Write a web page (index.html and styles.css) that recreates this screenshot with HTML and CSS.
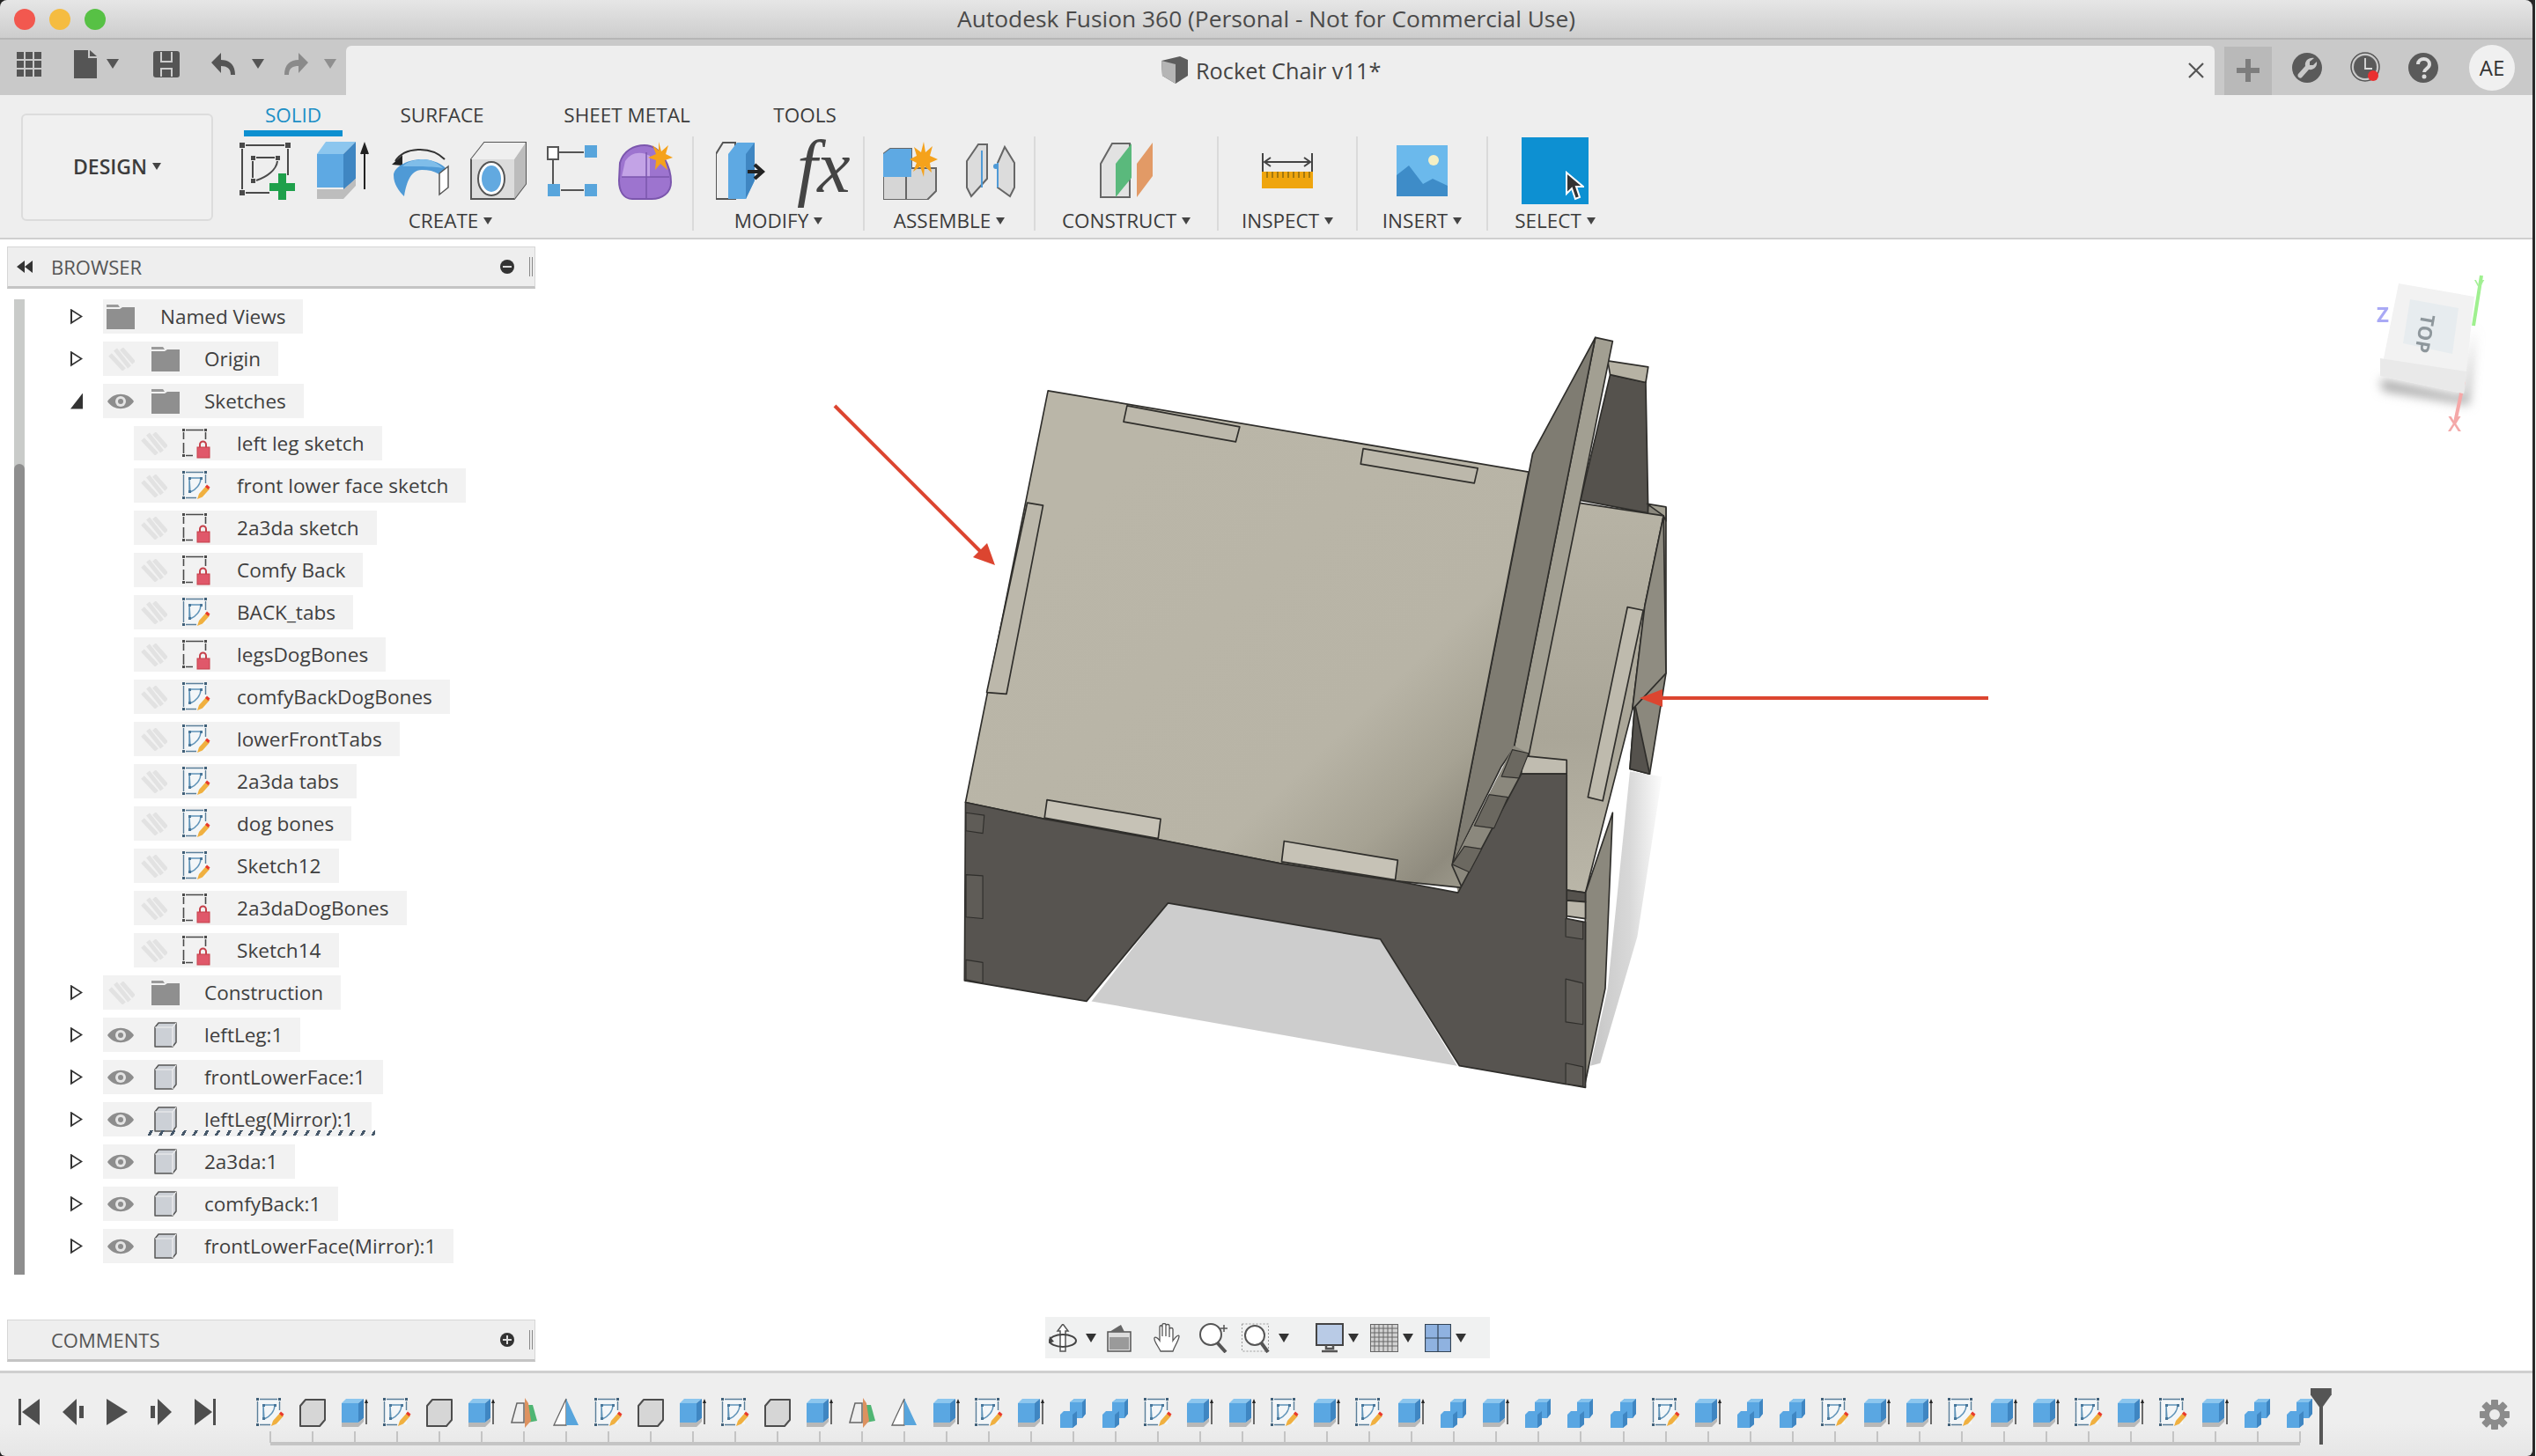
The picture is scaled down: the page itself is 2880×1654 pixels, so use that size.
FILE: index.html
```html
<!DOCTYPE html>
<html lang="en">
<head>
<meta charset="utf-8">
<title>Autodesk Fusion 360</title>
<link rel="stylesheet" href="styles.css">
</head>
<body>
<svg class="defs" width="0" height="0">
  <defs>
    <symbol id="sk-base" viewBox="0 0 32 34">
      <g fill="#4a4a4a"><rect x="0" y="0" width="3" height="3"/><rect x="25" y="0" width="3" height="3"/><rect x="0" y="29" width="3" height="3"/></g>
      <path d="M4 1.5H24M1.5 4V12M1.5 16V28M4 30.5H12M26.5 4V12" stroke="#4a4a4a" stroke-width="1.6" fill="none"/>
    </symbol>
    <symbol id="sk-lock" viewBox="0 0 32 34">
      <use href="#sk-base" width="32" height="34"/>
      <path d="M20 21v-3a3.5 3.5 0 0 1 7 0v3" fill="none" stroke="#c5404a" stroke-width="2"/>
      <rect x="17" y="21" width="14" height="12" fill="#e0586a" stroke="#c5404a"/>
    </symbol>
    <symbol id="sk-edit" viewBox="0 0 32 34">
      <path d="M2 2H27V30H2Z" fill="#f3f6f8"/>
      <g fill="#3f5f78"><rect x="0" y="0" width="3" height="3"/><rect x="25" y="0" width="3" height="3"/><rect x="0" y="29" width="3" height="3"/></g>
      <path d="M4 1.5H24M1.5 4V28M4 30.5H16M26.5 4V14" stroke="#5b7f9a" stroke-width="1.4" fill="none"/>
      <path d="M8 8H21C21 15 16 21 9 24ZM8 8V24" fill="none" stroke="#5f93b8" stroke-width="1.4"/>
      <g fill="#49779a"><rect x="7" y="7" width="3" height="3"/><rect x="20" y="7" width="3" height="3"/><rect x="7" y="22" width="3" height="3"/></g>
      <path d="M17 32l2-6 8-9 4 3.500-8 9z" fill="#f0b040"/>
      <path d="M26 18l2-2.500 3.500 3-2 2.500z" fill="#e8392c"/>
    </symbol>
    <symbol id="cube" viewBox="0 0 32 34">
      <path d="M8 2H30V25L24 32H2V9Z" fill="#d6d6d6" stroke="#4d4d4d" stroke-width="2" stroke-linejoin="round"/>
    </symbol>
    <symbol id="extrude" viewBox="0 0 32 34">
      <path d="M1 6H20V28H1Z" fill="#5aa7e2"/>
      <path d="M1 6L6 1H26L20 6Z" fill="#8cc6ee"/>
      <path d="M20 6L26 1V23L20 28Z" fill="#3f86c2"/>
      <path d="M1 28H20L26 23V27L20 33H1Z" fill="#b8b8b8"/>
      <path d="M29 30V4" stroke="#222" stroke-width="1.300" fill="none"/>
      <path d="M27 6L29 1L31 6Z" fill="#222"/>
    </symbol>
    <symbol id="combine" viewBox="0 0 32 34">
      <path d="M1 19L5 15H12V5L17 1H30V18L26 23H20V30L15 34H1Z" fill="#59a6e2"/>
      <path d="M12 5L17 1H30L26 5Z" fill="#86c2ec"/>
      <path d="M26 5L30 1V18L26 23Z" fill="#3f86c2"/>
      <path d="M15 19V34L20 30V15Z" fill="#3f86c2"/>
    </symbol>
    <symbol id="plane" viewBox="0 0 32 34">
      <path d="M2 28L8 6H16V28Z" fill="#eee" stroke="#666" stroke-width="1.500"/>
      <path d="M20 8H26L31 26L20 28Z" fill="#4fb573"/>
      <path d="M17 0V34L24 26L21 6Z" fill="#dd9260"/>
    </symbol>
    <symbol id="mirror" viewBox="0 0 32 34">
      <path d="M2 31L16 1V31Z" fill="#fff" stroke="#666" stroke-width="1.300"/>
      <path d="M16 1L30 31H16Z" fill="#58a5dc"/>
    </symbol>
    <symbol id="eye" viewBox="0 0 32 20">
      <path d="M1 10C8 -1 24 -1 31 10C24 21 8 21 1 10Z" fill="#8d8d8d"/>
      <circle cx="16" cy="10" r="6" fill="#e4e4e4"/>
      <circle cx="16" cy="10" r="3" fill="#8d8d8d"/>
    </symbol>
    <symbol id="eye-off" viewBox="0 0 32 26">
      <path d="M4 8L20 25M10 2L26 22M17 1L31 17" stroke="#e2e2e2" stroke-width="5" fill="none"/>
    </symbol>
    <symbol id="folder" viewBox="0 0 32 28">
      <path d="M0 0H13L15 3H0Z" fill="#9a9a9a"/>
      <path d="M0 5H15L18 3H32V28H0Z" fill="#8f8f8f"/>
    </symbol>
    <symbol id="body" viewBox="0 0 28 30">
      <path d="M6 1H26V23L22 28H2V6Z" fill="#ccd0d6" stroke="#555" stroke-width="1.500" stroke-linejoin="round"/>
      <path d="M2 6H22L26 1M22 6V28" fill="none" stroke="#f2f2f2" stroke-width="1.200"/>
    </symbol>
  </defs>
</svg>

<header class="titlebar">
  <div class="lights"><i class="light red"></i><i class="light amber"></i><i class="light green"></i></div>
  <div class="title">Autodesk Fusion 360 (Personal - Not for Commercial Use)</div>
</header>

<div class="tabbar">
  <div class="quick">
    <svg class="q-grid" width="28" height="28" viewBox="0 0 28 28"><g fill="#555"><rect width="8" height="8"/><rect x="10" width="8" height="8"/><rect x="20" width="8" height="8"/><rect y="10" width="8" height="8"/><rect x="10" y="10" width="8" height="8"/><rect x="20" y="10" width="8" height="8"/><rect y="20" width="8" height="8"/><rect x="10" y="20" width="8" height="8"/><rect x="20" y="20" width="8" height="8"/></g></svg>
    <svg class="q-file" width="26" height="32" viewBox="0 0 26 32"><path d="M0 0H16V9H26V32H0ZM18 0L26 7H18Z" fill="#555"/></svg>
    <i class="tri q-tri1"></i>
    <svg class="q-save" width="30" height="30" viewBox="0 0 30 30"><path d="M3 0H27Q30 0 30 3V27Q30 30 27 30H3Q0 30 0 27V3Q0 0 3 0Z" fill="#555"/><path d="M9 1V12H21V1" fill="none" stroke="#ccc" stroke-width="2"/><path d="M9 29V20H21V29" fill="none" stroke="#ccc" stroke-width="2"/></svg>
    <svg class="q-undo" width="28" height="26" viewBox="0 0 28 26"><path d="M11 0V8C20 8 27 13 27 25H22C22 17 17 15 11 15V23L0 11Z" fill="#555"/></svg>
    <i class="tri q-tri2"></i>
    <svg class="q-redo" width="28" height="26" viewBox="0 0 28 26"><path d="M17 0V8C8 8 1 13 1 25H6C6 17 11 15 17 15V23L28 11Z" fill="#8a8a8a"/></svg>
    <i class="tri tri-dim q-tri3"></i>
  </div>
  <div class="doc-tab">
    <div class="doc-title">
      <svg width="32" height="32" viewBox="0 0 32 32"><path d="M1 5L22 0L31 4V22L17 31L2 22Z" fill="#5d5d5d"/><path d="M1 5L17 9V31L2 22Z" fill="#b5b5b5"/></svg>
      <span>Rocket Chair v11*</span>
    </div>
    <svg class="doc-close" width="18" height="18" viewBox="0 0 18 18"><path d="M1 1L17 17M17 1L1 17" stroke="#555" stroke-width="2.200"/></svg>
  </div>
  <div class="account">
    <div class="new-tab"><svg width="26" height="26" viewBox="0 0 26 26"><path d="M10 0H16V10H26V16H16V26H10V16H0V10H10Z" fill="#7d7d7d"/></svg></div>
    <svg class="acc-ic" width="34" height="34" viewBox="0 0 34 34"><circle cx="17" cy="17" r="17" fill="#5a5a5a"/><path d="M25 6L20 10V14H24L28 10C29 15 25 20 19 19L11 28C9 30 5 27 7 24L15 15C14 9 19 5 25 6Z" fill="#c9c9c9"/></svg>
    <svg class="acc-ic" width="34" height="36" viewBox="0 0 34 36"><circle cx="17" cy="17" r="16" fill="#c9c9c9" stroke="#555" stroke-width="1.500"/><circle cx="17" cy="17" r="13" fill="#5a5a5a"/><path d="M17 7V19H25" fill="none" stroke="#ddd" stroke-width="1.800"/><circle cx="26" cy="27" r="6" fill="#ea3030"/></svg>
    <svg class="acc-ic" width="34" height="34" viewBox="0 0 34 34"><circle cx="17" cy="17" r="17" fill="#5a5a5a"/><path d="M11 13C11 5 24 5 24 13C24 18 18 18 18 22" fill="none" stroke="#ddd" stroke-width="4"/><circle cx="18" cy="27" r="2.500" fill="#ddd"/></svg>
    <div class="avatar">AE</div>
  </div>
</div>

<div class="toolbar">
  <div class="design"><span>DESIGN</span><i class="tri tri-sm"></i></div>
  <div class="tool-main">
    <nav class="tabs">
      <span class="tab tab-on">SOLID</span>
      <span class="tab tab-surface">SURFACE</span>
      <span class="tab tab-sheet">SHEET METAL</span>
      <span class="tab tab-tools">TOOLS</span>
    </nav>
    <div class="ribbon">
      <section class="group g-create">
        <div class="tools">
          <svg width="64" height="66" viewBox="0 0 64 66"><g fill="#4a4a4a"><rect x="1" y="1" width="6" height="6"/><rect x="53" y="1" width="6" height="6"/><rect x="1" y="55" width="6" height="6"/><rect x="14" y="16" width="5" height="5"/><rect x="42" y="16" width="5" height="5"/><rect x="14" y="42" width="5" height="5"/></g><path d="M8 4H52M4 8V54M8 58H35M56 8V38M20 18H41M16 22V41M44 22C43 32 32 40 20 44" fill="none" stroke="#4a4a4a" stroke-width="2"/><path d="M45 36H54V47H64V56H54V66H45V56H35V47H45Z" fill="#1ea04b"/></svg>
          <svg width="64" height="66" viewBox="0 0 64 66"><path d="M2 14H32V52H2Z" fill="#5ea9e3"/><path d="M2 14L12 0H46L32 14Z" fill="#8cc6ee"/><path d="M32 14L46 0V42L32 56Z" fill="#3f86c2"/><path d="M2 54H32L46 42V50L32 65H2Z" fill="#bdbdbd"/><path d="M56 54V8M52 14L56 3L60 14" stroke="#222" stroke-width="2" fill="#222"/></svg>
          <svg width="66" height="62" viewBox="0 0 66 62"><path d="M4 20C14 4 44 2 60 18" fill="none" stroke="#333" stroke-width="2"/><path d="M0 24L12 13V25Z" fill="#222"/><path d="M2 36C2 28 16 18 34 18C48 18 62 26 62 30V46C58 36 50 30 34 30C20 30 16 48 14 60C8 54 2 46 2 36Z" fill="#4f9ad6"/><path d="M12 26C18 20 28 18 36 18C44 18 52 22 58 28C48 26 22 26 12 26Z" fill="#7fbde9"/><path d="M54 34L64 26V50L54 58Z" fill="#fff" stroke="#555" stroke-width="1.500"/></svg>
          <svg width="64" height="66" viewBox="0 0 64 66"><path d="M1 20L16 1H63V48L50 65H1Z" fill="#dcdcdc" stroke="#555" stroke-width="2"/><path d="M50 20L63 1V48L50 65Z" fill="#bcbcbc"/><path d="M1 20L16 1H63L50 20Z" fill="#efefef"/><ellipse cx="24" cy="42" rx="15" ry="19" fill="#fff" stroke="#555" stroke-width="2"/><ellipse cx="24" cy="42" rx="11" ry="15" fill="#62a9e0"/></svg>
          <svg width="58" height="62" viewBox="0 0 58 62"><rect x="1" y="4" width="12" height="14" fill="#fff" stroke="#555" stroke-width="2"/><rect x="43" y="2" width="14" height="14" fill="#58a5dc"/><rect x="1" y="46" width="14" height="14" fill="#58a5dc"/><rect x="43" y="46" width="14" height="14" fill="#58a5dc"/><path d="M13 10H42M7 18V46M16 53H42" stroke="#555" stroke-width="2" fill="none"/></svg>
          <svg width="62" height="66" viewBox="0 0 62 66"><path d="M2 24C6 10 18 4 30 4C50 4 60 30 60 46C60 58 50 65 38 65H16C6 65 1 56 1 44Z" fill="#9d74cf" stroke="#7b56ad" stroke-width="2"/><path d="M8 22C14 12 26 10 36 16V40H4Z" fill="#c3a3e6"/><path d="M4 40H58M32 12V64" stroke="#7b56ad" stroke-width="1.500" fill="none"/><path d="M46 0L49 11L57 4L54 14L62 18L53 21L56 32L48 25L42 32L43 21L34 18L43 14L39 4L46 10Z" fill="#f5a21b"/></svg>
        </div>
        <div class="g-label">CREATE<i class="tri tri-sm"></i></div>
      </section>
      <section class="group g-modify">
        <div class="tools tools-wide tools-shift">
          <svg width="56" height="66" viewBox="0 0 56 66"><path d="M0 14L8 1H22V65H0Z" fill="#eee" stroke="#555" stroke-width="2"/><path d="M14 14L24 1H44V44L34 65H14Z" fill="#5ea9e3"/><path d="M34 14L44 1V44L34 65Z" fill="#3f86c2"/><path d="M36 34H50M44 26L53 34L44 42" fill="none" stroke="#222" stroke-width="4"/></svg>
          <span class="fx">fx</span>
        </div>
        <div class="g-label">MODIFY<i class="tri tri-sm"></i></div>
      </section>
      <section class="group g-assemble">
        <div class="tools tools-assemble">
          <svg width="62" height="66" viewBox="0 0 62 66"><path d="M0 14L8 8H32V30H60V56L50 66H0Z" fill="#d6d6d6" stroke="#666" stroke-width="2"/><path d="M0 14L8 8H32V40H0Z" fill="#5ea9e3"/><path d="M26 40V66" stroke="#666" stroke-width="2"/><path d="M46 0L48 12L56 5L53 16L62 20L53 24L55 35L47 28L46 40L42 28L34 34L38 24L30 20L38 16L35 6L43 12Z" fill="#f5a21b"/></svg>
          <svg width="56" height="62" viewBox="0 0 56 62"><path d="M1 50V20L14 1H24V40L6 60Z" fill="#dcdcdc" stroke="#666" stroke-width="2"/><path d="M55 50V22L44 4L36 22V50L50 60Z" fill="#dcdcdc" stroke="#666" stroke-width="2"/><path d="M18 8V50M36 22V50" stroke="#4f9ad6" stroke-width="2"/><circle cx="34" cy="26" r="3" fill="#4f9ad6"/></svg>
        </div>
        <div class="g-label">ASSEMBLE<i class="tri tri-sm"></i></div>
      </section>
      <section class="group g-construct">
        <div class="tools">
          <svg width="60" height="64" viewBox="0 0 60 64"><path d="M1 24L14 1H34V62H1Z" fill="#e2e2e2" stroke="#666" stroke-width="2"/><path d="M18 24L36 1V40L18 62Z" fill="#5ab97c"/><path d="M42 24L60 0V38L42 62Z" fill="#e29a66"/></svg>
        </div>
        <div class="g-label">CONSTRUCT<i class="tri tri-sm"></i></div>
      </section>
      <section class="group g-inspect">
        <div class="tools">
          <svg width="58" height="40" viewBox="0 0 58 40"><path d="M1 0V22M57 0V22M4 10H54M10 5L3 10L10 15M48 5L55 10L48 15" fill="none" stroke="#444" stroke-width="2"/><rect x="0" y="21" width="58" height="19" fill="#efa50e"/><path d="M6 21v7M12 21v7M18 21v7M24 21v7M30 21v7M36 21v7M42 21v7M48 21v7M54 21v7" stroke="#8a6a10" stroke-width="1.500"/></svg>
        </div>
        <div class="g-label">INSPECT<i class="tri tri-sm"></i></div>
      </section>
      <section class="group g-insert">
        <div class="tools">
          <svg width="58" height="58" viewBox="0 0 58 58"><rect width="58" height="58" fill="#6bb9ec"/><circle cx="42" cy="17" r="6" fill="#f4efc4"/><path d="M0 58V34L14 23L30 44L41 38L58 46V58Z" fill="#3e8cc8"/></svg>
        </div>
        <div class="g-label">INSERT<i class="tri tri-sm"></i></div>
      </section>
      <section class="group g-select">
        <div class="tools">
          <div class="select-box"><svg width="22" height="34" viewBox="0 0 22 34"><path d="M2 2V26L8 20L12 32L17 30L13 18H21Z" fill="#333" stroke="#fff" stroke-width="2"/></svg></div>
        </div>
        <div class="g-label">SELECT<i class="tri tri-sm"></i></div>
      </section>
    </div>
  </div>
</div>

<main class="canvas">
  <svg class="model" width="1400" height="960" viewBox="900 340 1400 960">
    <defs>
      <linearGradient id="plate" x1=".25" y1=".2" x2="1" y2=".9">
        <stop offset="0" stop-color="#bab6a8"/><stop offset=".62" stop-color="#b8b4a6"/><stop offset=".8" stop-color="#a6a293"/><stop offset=".92" stop-color="#8f8b7e"/><stop offset="1" stop-color="#9f9c8e"/>
      </linearGradient>
      <linearGradient id="shade" gradientUnits="userSpaceOnUse" x1="1340" y1="0" x2="1480" y2="0">
        <stop offset="0" stop-color="#c8c8c8"/><stop offset=".5" stop-color="#d8d8d8"/><stop offset="1" stop-color="#fff"/>
      </linearGradient>
      <linearGradient id="seat" x1="0" y1="0" x2="0" y2="1">
        <stop offset="0" stop-color="#b7b3a5"/><stop offset=".6" stop-color="#aaa698"/><stop offset="1" stop-color="#bab6a8"/>
      </linearGradient>
    </defs>
    <g transform="matrix(.561 0 0 .5867 1060 360)" stroke="#2f2e2b" stroke-width="3" stroke-linejoin="round">
      <path d="M475 1135L905 1205L1060 1450L320 1325Z" fill="#cdcdcd" stroke="none"/>
      <path d="M1330 1450L1365 1300L1410 880L1475 890L1425 1200L1350 1445Z" fill="url(#shade)" stroke="none"/>

      <path d="M1370 112L1442 127L1447 380L1310 355Z" fill="#55524d"/>
      <path d="M1365 85L1447 97L1442 127L1370 112Z" fill="#b6b2a4"/>
      <path d="M1447 365L1483 370L1483 690L1450 885L1410 875L1420 750L1440 560Z" fill="#8b887d"/>
      <path d="M1420 750L1450 885L1410 875Z" fill="#55524d"/>
      <path d="M1445 362L1483 368V395L1478 385Z" fill="#a3a092"/>
      <path d="M1305 360L1478 385L1440 560L1415 760L1320 1115L1282 1110L1282 885L1195 850L1175 830Z" fill="url(#seat)"/>
      <path d="M1405 562L1437 568L1355 937L1325 930Z" fill="#bebaad"/>
      <path d="M1440 560L1478 385L1483 690L1415 760Z" fill="#8f8c81"/>

      <path d="M1340 40L1375 47L1205 850L1175 835Z" fill="#a29f92"/>
      <path d="M1213 265L1340 40L1175 835L1150 870L1050 1062Z" fill="#7f7c72"/>
      <path d="M1175 830L1050 1062L1062 1115L1190 885L1205 845Z" fill="#8b887d" stroke="none"/>

      <path d="M232 143L1205 300L1050 1062L1070 1105L935 1092L700 1058L455 1012L225 972L65 940Z" fill="url(#plate)"/>
      <path d="M392 172L620 213L612 242L385 203Z" fill="#bcb8ab"/>
      <path d="M870 255L1102 293L1095 322L865 285Z" fill="#bcb8ab"/>
      <path d="M190 360L222 365L148 730L108 727Z" fill="#bcb8ab"/>
      <path d="M230 935L460 972L455 1010L225 970Z" fill="#c6c2b6"/>
      <path d="M710 1015L940 1052L935 1090L705 1055Z" fill="#c6c2b6"/>

      <path d="M1195 850L1282 858V885L1190 885Z" fill="#c0bcb0"/>
      <path d="M1320 1115L1375 960L1360 1300L1318 1490Z" fill="#8b887d"/>
      <path d="M1282 1110L1320 1115V1133L1282 1130Z" fill="#55524d"/>
      <path d="M1282 1130L1320 1133V1165L1282 1160Z" fill="#bab6aa"/>
      <path d="M65 940L225 972L455 1012L700 1058L935 1092L1062 1115L1190 885L1282 885V1165L1320 1172V1492L1065 1450L905 1205L475 1135L310 1325L63 1285Z" fill="#575450"/>
      <g fill="#5f5c57" stroke-width="2">
        <path d="M66 960L103 965L100 1000L66 995Z"/><path d="M66 1080L100 1082V1165L66 1162Z"/><path d="M66 1245L100 1250V1290L66 1283Z"/>
        <path d="M1280 1165L1315 1172V1205L1280 1200Z"/><path d="M1280 1282L1315 1290V1370L1280 1365Z"/><path d="M1280 1445L1315 1452V1490L1280 1485Z"/>
      </g>
      <g fill="#6b6860" stroke-width="2">
        <path d="M1150 890L1172 838L1205 845L1185 893Z"/><path d="M1095 985L1125 925L1163 930L1135 990Z"/><path d="M1050 1060L1075 1025L1110 1030L1085 1075Z"/>
      </g>
    </g>
    <path d="M948 461L1116 629" stroke="#dc4530" stroke-width="4" fill="none"/>
    <path d="M1130 642L1105 633L1121 617Z" fill="#dc4530"/>
    <path d="M2258 793H1880" stroke="#dc4530" stroke-width="4" fill="none"/>
    <path d="M1862 793L1888 783V803Z" fill="#dc4530"/>
  </svg>

  <svg class="viewcube" width="150" height="190" viewBox="0 0 150 190">
    <defs><filter id="soft" x="-30%" y="-30%" width="160%" height="160%"><feGaussianBlur stdDeviation="6"/></filter></defs>
    <path d="M17 118L112 138L124 60L118 148L20 132Z" fill="#aaa" filter="url(#soft)"/>
    <path d="M132 1L123 58" stroke="#9ff08f" stroke-width="4"/>
    <path d="M112 121L102 168" stroke="#f5a8a8" stroke-width="4"/>
    <path d="M38 10L124 25L112 135L17 115Z" fill="#f2f2f2"/>
    <path d="M17 95L115 110L112 135L17 115Z" fill="#e9e9e9"/>
    <path d="M51 28L106 38L99 90L43 78Z" fill="#e7ecef"/>
    <text class="cube-top" transform="translate(64 44) rotate(100)">TOP</text>
    <text class="cube-z" x="13" y="54">Z</text>
    <text class="cube-y" x="124" y="20">Y</text>
    <text class="cube-x" x="94" y="178">X</text>
  </svg>

  <aside class="browser">
    <div class="panel-head">
      <svg class="head-rw" width="18" height="14" viewBox="0 0 18 14"><path d="M9 0V14L0 7ZM18 0V14L9 7Z" fill="#333"/></svg>
      <span class="panel-title">BROWSER</span>
      <svg class="head-btn" width="16" height="16" viewBox="0 0 16 16"><circle cx="8" cy="8" r="8" fill="#333"/><path d="M3 8H13" stroke="#ddd" stroke-width="2"/></svg>
      <i class="head-grip"></i>
    </div>
    <div class="browser-body">
      <div class="scroll"><div class="thumb"></div></div>
      <div class="tree">
        <div class="row"><i class="tw"></i><div class="pill"><span class="cell-eye"><svg width="32" height="28"><use href="#folder"/></svg></span><span class="name name-nv">Named Views</span></div></div>
        <div class="row"><i class="tw"></i><div class="pill"><span class="cell-eye"><svg width="32" height="26"><use href="#eye-off"/></svg></span><span class="cell-ic"><svg width="32" height="28"><use href="#folder"/></svg></span><span class="name">Origin</span></div></div>
        <div class="row"><i class="tw tw-open"></i><div class="pill"><span class="cell-eye"><svg width="32" height="20"><use href="#eye"/></svg></span><span class="cell-ic"><svg width="32" height="28"><use href="#folder"/></svg></span><span class="name">Sketches</span></div></div>

        <div class="row child"><div class="pill"><span class="c-eye"><svg width="32" height="26"><use href="#eye-off"/></svg></span><span class="c-ic"><svg width="32" height="34"><use href="#sk-lock"/></svg></span><span class="c-name">left leg sketch</span></div></div>
        <div class="row child"><div class="pill"><span class="c-eye"><svg width="32" height="26"><use href="#eye-off"/></svg></span><span class="c-ic"><svg width="32" height="34"><use href="#sk-edit"/></svg></span><span class="c-name">front lower face sketch</span></div></div>
        <div class="row child"><div class="pill"><span class="c-eye"><svg width="32" height="26"><use href="#eye-off"/></svg></span><span class="c-ic"><svg width="32" height="34"><use href="#sk-lock"/></svg></span><span class="c-name">2a3da sketch</span></div></div>
        <div class="row child"><div class="pill"><span class="c-eye"><svg width="32" height="26"><use href="#eye-off"/></svg></span><span class="c-ic"><svg width="32" height="34"><use href="#sk-lock"/></svg></span><span class="c-name">Comfy Back</span></div></div>
        <div class="row child"><div class="pill"><span class="c-eye"><svg width="32" height="26"><use href="#eye-off"/></svg></span><span class="c-ic"><svg width="32" height="34"><use href="#sk-edit"/></svg></span><span class="c-name">BACK_tabs</span></div></div>
        <div class="row child"><div class="pill"><span class="c-eye"><svg width="32" height="26"><use href="#eye-off"/></svg></span><span class="c-ic"><svg width="32" height="34"><use href="#sk-lock"/></svg></span><span class="c-name">legsDogBones</span></div></div>
        <div class="row child"><div class="pill"><span class="c-eye"><svg width="32" height="26"><use href="#eye-off"/></svg></span><span class="c-ic"><svg width="32" height="34"><use href="#sk-edit"/></svg></span><span class="c-name">comfyBackDogBones</span></div></div>
        <div class="row child"><div class="pill"><span class="c-eye"><svg width="32" height="26"><use href="#eye-off"/></svg></span><span class="c-ic"><svg width="32" height="34"><use href="#sk-edit"/></svg></span><span class="c-name">lowerFrontTabs</span></div></div>
        <div class="row child"><div class="pill"><span class="c-eye"><svg width="32" height="26"><use href="#eye-off"/></svg></span><span class="c-ic"><svg width="32" height="34"><use href="#sk-edit"/></svg></span><span class="c-name">2a3da tabs</span></div></div>
        <div class="row child"><div class="pill"><span class="c-eye"><svg width="32" height="26"><use href="#eye-off"/></svg></span><span class="c-ic"><svg width="32" height="34"><use href="#sk-edit"/></svg></span><span class="c-name">dog bones</span></div></div>
        <div class="row child"><div class="pill"><span class="c-eye"><svg width="32" height="26"><use href="#eye-off"/></svg></span><span class="c-ic"><svg width="32" height="34"><use href="#sk-edit"/></svg></span><span class="c-name">Sketch12</span></div></div>
        <div class="row child"><div class="pill"><span class="c-eye"><svg width="32" height="26"><use href="#eye-off"/></svg></span><span class="c-ic"><svg width="32" height="34"><use href="#sk-lock"/></svg></span><span class="c-name">2a3daDogBones</span></div></div>
        <div class="row child"><div class="pill"><span class="c-eye"><svg width="32" height="26"><use href="#eye-off"/></svg></span><span class="c-ic"><svg width="32" height="34"><use href="#sk-lock"/></svg></span><span class="c-name">Sketch14</span></div></div>

        <div class="row"><i class="tw"></i><div class="pill"><span class="cell-eye"><svg width="32" height="26"><use href="#eye-off"/></svg></span><span class="cell-ic"><svg width="32" height="28"><use href="#folder"/></svg></span><span class="name">Construction</span></div></div>
        <div class="row"><i class="tw"></i><div class="pill"><span class="cell-eye"><svg width="32" height="20"><use href="#eye"/></svg></span><span class="cell-ic"><svg width="28" height="30"><use href="#body"/></svg></span><span class="name">leftLeg:1</span></div></div>
        <div class="row"><i class="tw"></i><div class="pill"><span class="cell-eye"><svg width="32" height="20"><use href="#eye"/></svg></span><span class="cell-ic"><svg width="28" height="30"><use href="#body"/></svg></span><span class="name">frontLowerFace:1</span></div></div>
        <div class="row"><i class="tw"></i><div class="pill pill-warn"><span class="cell-eye"><svg width="32" height="20"><use href="#eye"/></svg></span><span class="cell-ic"><svg width="28" height="30"><use href="#body"/></svg></span><span class="name">leftLeg(Mirror):1</span><i class="squiggle"></i></div></div>
        <div class="row"><i class="tw"></i><div class="pill"><span class="cell-eye"><svg width="32" height="20"><use href="#eye"/></svg></span><span class="cell-ic"><svg width="28" height="30"><use href="#body"/></svg></span><span class="name">2a3da:1</span></div></div>
        <div class="row"><i class="tw"></i><div class="pill"><span class="cell-eye"><svg width="32" height="20"><use href="#eye"/></svg></span><span class="cell-ic"><svg width="28" height="30"><use href="#body"/></svg></span><span class="name">comfyBack:1</span></div></div>
        <div class="row"><i class="tw"></i><div class="pill"><span class="cell-eye"><svg width="32" height="20"><use href="#eye"/></svg></span><span class="cell-ic"><svg width="28" height="30"><use href="#body"/></svg></span><span class="name">frontLowerFace(Mirror):1</span></div></div>
      </div>
    </div>
  </aside>

  <aside class="comments">
    <span class="panel-title">COMMENTS</span>
    <svg class="head-btn" width="16" height="16" viewBox="0 0 16 16"><circle cx="8" cy="8" r="8" fill="#333"/><path d="M3 8H13M8 3V13" stroke="#ddd" stroke-width="2"/></svg>
    <i class="head-grip"></i>
  </aside>

  <div class="navbar">
    <svg class="nv" width="34" height="32" viewBox="0 0 34 32"><path d="M17 0L23 8H20V31H14V8H11Z" fill="#fff" stroke="#555" stroke-width="1.500"/><ellipse cx="17" cy="19" rx="15" ry="7" fill="none" stroke="#444" stroke-width="2"/><path d="M2 14L1 22L7 20Z" fill="#444"/></svg><i class="tri tri-nav nv-gap1"></i>
    <svg class="nv nv-pan" width="28" height="32" viewBox="0 0 28 32"><path d="M1 9H27V31H1Z" fill="#ddd" stroke="#555" stroke-width="1.500"/><rect x="3" y="15" width="22" height="14" fill="#9a9a9a"/><path d="M3 9L16 1L20 9Z" fill="#666"/></svg>
    <svg class="nv nv-hand" width="32" height="34" viewBox="0 0 32 34"><path d="M9 32C6 26 1 20 2 17C3 15 6 17 8 20V5C8 2 11 2 11 5V15V2C11 0 15 0 15 2V15V3C15 1 19 1 19 3V16V7C19 5 23 5 23 7V20C27 14 30 13 30 15C30 19 25 26 23 32Z" fill="#fff" stroke="#555" stroke-width="1.300"/></svg>
    <svg class="nv nv-zoom" width="34" height="34" viewBox="0 0 34 34"><circle cx="14" cy="13" r="12" fill="#fff" stroke="#555" stroke-width="2"/><path d="M21 22L31 33" stroke="#555" stroke-width="4"/><path d="M29 2V10M25 6H33" stroke="#555" stroke-width="1.500"/></svg>
    <svg class="nv nv-fit" width="32" height="34" viewBox="0 0 32 34"><rect x=".5" y="1" width="30" height="31" fill="none" stroke="#999" stroke-dasharray="2 2"/><circle cx="15" cy="14" r="11" fill="#fff" stroke="#555" stroke-width="2"/><path d="M22 22L30 33" stroke="#555" stroke-width="4"/></svg><i class="tri tri-nav nv-gap2"></i>
    <svg class="nv nv-disp" width="32" height="34" viewBox="0 0 32 34"><rect x="1" y="1" width="30" height="24" fill="#b9cbe6" stroke="#444" stroke-width="2"/><path d="M12 25V29H20V25M7 32H25" stroke="#555" stroke-width="2.500" fill="none"/></svg><i class="tri tri-nav nv-gap3"></i>
    <svg class="nv nv-grid" width="32" height="32" viewBox="0 0 32 32"><rect width="32" height="32" fill="#d2d2d2"/><path d="M0 .5H32M0 5H32M0 10H32M0 15H32M0 20H32M0 25H32M0 31.500H32M.5 0V32M5 0V32M10 0V32M15 0V32M20 0V32M25 0V32M31.500 0V32" stroke="#666" stroke-width="1"/></svg><i class="tri tri-nav nv-gap3"></i>
    <svg class="nv nv-view" width="30" height="32" viewBox="0 0 30 32"><rect width="30" height="32" fill="#8fb2e0"/><path d="M.5 .5H29.500V31.500H.5ZM15 0V32M0 16H30" stroke="#345" stroke-width="1.200" fill="none"/></svg><i class="tri tri-nav nv-gap3"></i>
  </div>
</main>

<footer class="timeline">
  <div class="player">
    <svg width="24" height="30" viewBox="0 0 24 30"><path d="M0 0H3V30H0ZM24 0V30L4 15Z" fill="#4e4e4e"/></svg>
    <svg width="24" height="30" viewBox="0 0 24 30"><path d="M16 0V30L0 15ZM19 8H24V22H19Z" fill="#4e4e4e"/></svg>
    <svg width="24" height="30" viewBox="0 0 24 30"><path d="M0 0L24 15L0 30Z" fill="#4e4e4e"/></svg>
    <svg width="24" height="30" viewBox="0 0 24 30"><path d="M8 0V30L24 15ZM0 8H5V22H0Z" fill="#4e4e4e"/></svg>
    <svg width="24" height="30" viewBox="0 0 24 30"><path d="M21 0H24V30H21ZM0 0V30L20 15Z" fill="#4e4e4e"/></svg>
  </div>
  <div class="track">
    <div class="step"><svg><use href="#sk-edit"/></svg></div>
    <div class="step"><svg><use href="#cube"/></svg></div>
    <div class="step"><svg><use href="#extrude"/></svg></div>
    <div class="step"><svg><use href="#sk-edit"/></svg></div>
    <div class="step"><svg><use href="#cube"/></svg></div>
    <div class="step"><svg><use href="#extrude"/></svg></div>
    <div class="step"><svg><use href="#plane"/></svg></div>
    <div class="step"><svg><use href="#mirror"/></svg></div>
    <div class="step"><svg><use href="#sk-edit"/></svg></div>
    <div class="step"><svg><use href="#cube"/></svg></div>
    <div class="step"><svg><use href="#extrude"/></svg></div>
    <div class="step"><svg><use href="#sk-edit"/></svg></div>
    <div class="step"><svg><use href="#cube"/></svg></div>
    <div class="step"><svg><use href="#extrude"/></svg></div>
    <div class="step"><svg><use href="#plane"/></svg></div>
    <div class="step"><svg><use href="#mirror"/></svg></div>
    <div class="step"><svg><use href="#extrude"/></svg></div>
    <div class="step"><svg><use href="#sk-edit"/></svg></div>
    <div class="step"><svg><use href="#extrude"/></svg></div>
    <div class="step"><svg><use href="#combine"/></svg></div>
    <div class="step"><svg><use href="#combine"/></svg></div>
    <div class="step"><svg><use href="#sk-edit"/></svg></div>
    <div class="step"><svg><use href="#extrude"/></svg></div>
    <div class="step"><svg><use href="#extrude"/></svg></div>
    <div class="step"><svg><use href="#sk-edit"/></svg></div>
    <div class="step"><svg><use href="#extrude"/></svg></div>
    <div class="step"><svg><use href="#sk-edit"/></svg></div>
    <div class="step"><svg><use href="#extrude"/></svg></div>
    <div class="step"><svg><use href="#combine"/></svg></div>
    <div class="step"><svg><use href="#extrude"/></svg></div>
    <div class="step"><svg><use href="#combine"/></svg></div>
    <div class="step"><svg><use href="#combine"/></svg></div>
    <div class="step"><svg><use href="#combine"/></svg></div>
    <div class="step"><svg><use href="#sk-edit"/></svg></div>
    <div class="step"><svg><use href="#extrude"/></svg></div>
    <div class="step"><svg><use href="#combine"/></svg></div>
    <div class="step"><svg><use href="#combine"/></svg></div>
    <div class="step"><svg><use href="#sk-edit"/></svg></div>
    <div class="step"><svg><use href="#extrude"/></svg></div>
    <div class="step"><svg><use href="#extrude"/></svg></div>
    <div class="step"><svg><use href="#sk-edit"/></svg></div>
    <div class="step"><svg><use href="#extrude"/></svg></div>
    <div class="step"><svg><use href="#extrude"/></svg></div>
    <div class="step"><svg><use href="#sk-edit"/></svg></div>
    <div class="step"><svg><use href="#extrude"/></svg></div>
    <div class="step"><svg><use href="#sk-edit"/></svg></div>
    <div class="step"><svg><use href="#extrude"/></svg></div>
    <div class="step"><svg><use href="#combine"/></svg></div>
    <div class="step"><svg><use href="#combine"/></svg></div>
    <div class="playhead"></div>
  </div>
  <svg class="gear" width="34" height="34" viewBox="0 0 34 34"><g fill="#8b8b8b"><circle cx="17" cy="17" r="12"/><rect x="13" y="0" width="8" height="34" rx="1"/><rect x="13" y="0" width="8" height="34" rx="1" transform="rotate(45 17 17)"/><rect x="13" y="0" width="8" height="34" rx="1" transform="rotate(90 17 17)"/><rect x="13" y="0" width="8" height="34" rx="1" transform="rotate(135 17 17)"/></g><circle cx="17" cy="17" r="6" fill="#ececec"/></svg>
</footer>
</body>
</html>
```

FILE: styles.css
```css
* { box-sizing: border-box; }
html { background: #fff; }
html, body { margin: 0; padding: 0; }
body {
  width: 2879px;
  height: 1654px;
  overflow: hidden;
  display: flex;
  flex-direction: column;
  background: #222;
  font-family: "Open Sans", "Noto Sans", sans-serif;
  color: #3a3a3a;
  border-right: 3px solid #2a2a2a;
}
.defs { position: absolute; }
svg { display: block; flex: none; }
i { display: block; flex: none; }

/* title bar */
.titlebar {
  height: 45px;
  flex: none;
  position: relative;
  display: flex;
  align-items: center;
  justify-content: center;
  background: linear-gradient(#e6e6e6, #cdcdcd);
  border-bottom: 2px solid #b6b6b6;
  border-radius: 8px 8px 0 0;
}
.lights { position: absolute; left: 16px; top: 10px; display: flex; gap: 16px; }
.light { width: 24px; height: 24px; border-radius: 50%; }
.red { background: #f2584f; }
.amber { background: #f5bc40; }
.green { background: #57c145; }
.title { font-size: 26.35px; color: #4a4a4a; padding-bottom: 1px; }

/* tab strip */
.tabbar {
  height: 63px;
  flex: none;
  display: flex;
  background: #c9c9c9;
}
.quick { width: 393px; flex: none; display: flex; align-items: center; padding-bottom: 8px; }
.q-grid { margin-left: 19px; }
.q-file { margin-left: 37px; }
.q-tri1 { margin-left: 11px; }
.q-save { margin-left: 39px; }
.q-undo { margin-left: 36px; }
.q-tri2 { margin-left: 18px; }
.q-redo { margin-left: 22px; }
.q-tri3 { margin-left: 18px; }
.tri {
  width: 0; height: 0;
  border-left: 7px solid transparent;
  border-right: 7px solid transparent;
  border-top: 11px solid #555;
}
.tri-dim { border-top-color: #8f8f8f; }
.tri-sm { border-left-width: 5px; border-right-width: 5px; border-top-width: 8px; border-top-color: #444; margin-left: 6px; }
.doc-tab {
  width: 2122px;
  flex: none;
  margin-top: 7px;
  background: #eee;
  border-radius: 6px 6px 0 0;
  display: flex;
  align-items: center;
}
.doc-title { margin-left: 925px; display: flex; align-items: center; gap: 8px; font-size: 25.3px; color: #444; }
.doc-close { margin-left: auto; margin-right: 12px; }
.account { flex: 1; display: flex; align-items: center; padding-left: 11px; }
.new-tab { width: 54px; height: 55px; margin-top: 7px; background: #b9b9b9; display: flex; align-items: center; justify-content: center; }
.acc-ic { margin-left: 23px; }
.acc-ic + .acc-ic { margin-left: 32px; }
.avatar {
  width: 52px; height: 52px;
  margin-left: 35px;
  border-radius: 50%;
  background: #f0f0f0;
  display: flex;
  align-items: center;
  justify-content: center;
  font-size: 24px;
  color: #333;
}

/* ribbon */
.toolbar {
  height: 164px;
  flex: none;
  display: flex;
  background: #eee;
  border-bottom: 2px solid #cfcfcf;
}
.design {
  width: 218px; height: 122px;
  margin: 21px 21px 0 24px;
  flex: none;
  display: flex;
  align-items: center;
  justify-content: center;
  border: 2px solid #dcdcdc;
  border-radius: 6px;
  background: #f0f0f0;
  font-size: 23px;
  font-weight: 600;
  color: #3c3c3c;
  padding-bottom: 3px;
}
.tool-main { flex: 1; display: flex; flex-direction: column; }
.tabs { height: 47px; display: flex; align-items: flex-start; }
.tab { font-size: 22.5px; height: 47px; padding-top: 7px; color: #3c3c3c; text-align: center; white-space: nowrap; }
.tab-on { width: 112px; margin-left: 14px; color: #1d8fc6; border-bottom: 7px solid #0c8fd0; }
.tab-surface { width: 110px; margin-left: 58px; }
.tab-sheet { width: 170px; margin-left: 70px; }
.tab-tools { width: 90px; margin-left: 72px; }
.ribbon { flex: 1; display: flex; }
.group {
  display: flex;
  flex-direction: column;
  align-items: center;
  border-right: 2px solid #dadada;
  height: 107px;
}
.g-create { width: 525px; padding-right: 14px; }
.g-create .g-label { margin-right: 12px; }
.g-modify { width: 194px; }
.g-assemble { width: 194px; }
.g-construct { width: 208px; }
.g-inspect { width: 158px; }
.g-insert { width: 148px; }
.g-select { width: 152px; border-right: 0; }
.tools { height: 78px; flex: none; display: flex; align-items: center; justify-content: center; gap: 23px; }
.tools-wide { gap: 36px; }
.tools-shift { margin-left: 6px; }
.tools-assemble { gap: 32px; }
.fx { font-family: "Liberation Serif", serif; font-style: italic; font-size: 84px; line-height: 66px; color: #444; width: 56px; padding-bottom: 8px; }
.select-box {
  width: 76px; height: 76px;
  background: #0d90d2;
  display: flex;
  align-items: flex-end;
  justify-content: flex-end;
  padding: 0 5px 4px 0;
}
.g-label { font-size: 22.5px; color: #3c3c3c; display: flex; align-items: center; line-height: 30px; margin-top: 3px; }

/* canvas */
.canvas { flex: 1; position: relative; background: #fff; min-height: 0; }
.model { position: absolute; left: 900px; top: 68px; }
.viewcube { position: absolute; left: 2686px; top: 40px; filter: blur(.7px); }
.cube-top { font-size: 22px; font-weight: 700; fill: #8e979c; }
.cube-z { font-size: 24px; font-weight: 700; fill: #a9a9f5; }
.cube-y { font-size: 20px; fill: #a5f098; }
.cube-x { font-size: 24px; font-weight: 600; fill: #f3a9a9; }

.browser { position: absolute; left: 8px; top: 8px; width: 600px; }
.panel-head {
  height: 48px;
  display: flex;
  align-items: center;
  background: #eee;
  border: 1px solid #d6d6d6;
  border-bottom: 3px solid #c4c4c4;
  padding-left: 10px;
}
.panel-title { font-size: 22px; color: #555; }
.head-rw { margin-right: 21px; }
.head-btn { margin-left: auto; margin-right: 17px; }
.head-grip { width: 4px; height: 22px; border-left: 1px solid #888; border-right: 1px solid #888; margin-right: 2px; }
.browser-body { display: flex; padding-top: 12px; }
.scroll { width: 12px; height: 1108px; margin-left: 8px; background: #c9cbc9; flex: none; padding-top: 187px; }
.thumb { height: 921px; background: #8e8e8e; border-radius: 6px 6px 0 0; }
.tree { flex: 1; }
.row { display: flex; align-items: center; height: 39px; margin-bottom: 9px; padding-left: 50px; }
.row.child { padding-left: 124px; }
.tw { width: 14px; height: 18px; margin-right: 23px; margin-left: 2px; background: #333; clip-path: polygon(0 0, 100% 50%, 0 100%); position: relative; }
.tw::after { content: ""; position: absolute; left: 1.5px; top: 3px; width: 9.5px; height: 12px; background: #fff; clip-path: polygon(0 0, 100% 50%, 0 100%); }
.tw-open { clip-path: polygon(100% 0, 100% 100%, 0 100%); }
.tw-open::after { display: none; }
.pill { height: 39px; display: flex; align-items: center; background: #f2f2f2; padding-right: 20px; position: relative; }
.cell-eye { width: 40px; display: flex; justify-content: center; }
.cell-ic { width: 62px; display: flex; justify-content: center; }
.name { margin-left: 13px; font-size: 22.5px; color: #3f3f3f; white-space: nowrap; }
.name-nv { margin-left: 25px; }
.c-eye { width: 44px; display: flex; justify-content: center; }
.c-ic { width: 54px; display: flex; justify-content: center; }
.c-name { margin-left: 19px; font-size: 22.6px; color: #3f3f3f; white-space: nowrap; }
.squiggle {
  position: absolute;
  left: 48px; right: -4px; bottom: 1px;
  height: 6px;
  background: repeating-linear-gradient(120deg, transparent 0 5px, #46586a 5px 8px, transparent 8px 11px);
}

.comments {
  position: absolute;
  left: 8px; top: 1227px;
  width: 600px; height: 48px;
  display: flex;
  align-items: center;
  background: #eee;
  border: 1px solid #d6d6d6;
  border-bottom: 3px solid #c4c4c4;
  padding-left: 49px;
}
.navbar {
  position: absolute;
  left: 1187px; top: 1224px;
  width: 505px; height: 47px;
  background: #f0f1f1;
  display: flex;
  align-items: center;
  padding-left: 3px;
}
.tri-nav { border-left-width: 6px; border-right-width: 6px; border-top-width: 10px; border-top-color: #333; }
.nv-gap1 { margin-left: 9px; margin-right: 12px; }
.nv-hand { margin-left: 24px; }
.nv-zoom { margin-left: 20px; }
.nv-fit { margin-left: 15px; }
.nv-gap2 { margin-left: 10px; margin-right: 30px; }
.nv-gap3 { margin-left: 5px; margin-right: 13px; }

/* timeline */
.timeline {
  height: 97px;
  flex: none;
  display: flex;
  align-items: flex-start;
  border-top: 3px solid #cfcfcf;
  background: linear-gradient(#eeeeee 60%, #e6e6e6);
  border-radius: 0 0 6px 6px;
}
.player { width: 258px; height: 60px; padding-top: 28px; display: flex; flex: none; gap: 26px; padding-left: 21px; align-items: center; }
.track { display: flex; margin-left: 25px; position: relative; padding-top: 28px; }
.track::after { content: ""; position: absolute; left: 24px; right: 24px; top: 78px; height: 4px; background: #c4c4c4; }
.step { width: 48.03px; height: 66px; display: flex; flex-direction: column; align-items: center; }
.step svg { width: 32px; height: 34px; }
.step::after { content: ""; width: 2px; height: 13px; margin-top: 4px; background: #c4c4c4; }
.playhead { position: absolute; right: -12px; top: 17px; width: 24px; height: 64px; }
.playhead::before { content: ""; position: absolute; left: 0; top: 0; width: 24px; height: 24px; background: #555; clip-path: polygon(0 0, 100% 0, 100% 30%, 50% 100%, 0 30%); }
.playhead::after { content: ""; position: absolute; left: 10px; top: 16px; width: 4px; height: 48px; background: #555; }
.gear { margin-left: auto; margin-right: 26px; margin-top: 30px; }
```
